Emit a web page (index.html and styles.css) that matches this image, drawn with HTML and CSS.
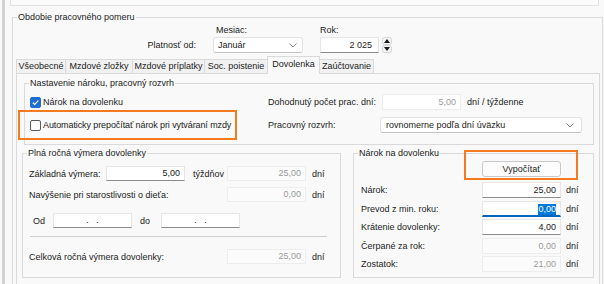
FILE: index.html
```html
<!DOCTYPE html>
<html lang="sk">

<head>
    <meta charset="UTF-8" />
    <meta name="viewport" content="width=device-width, initial-scale=1.0" />
    <title>Dovolenka</title>
    <link rel="stylesheet" href="styles.css">
</head>

<body>
    <div class="win">
        <div class="strip"></div>

        <!-- obdobie pracovneho pomeru -->
        <fieldset class="period">
            <legend>Obdobie pracovného pomeru</legend>
            <div class="period-head">
                <span></span>
                <span class="cap month">Mesiac:</span>
                <span class="cap">Rok:</span>
                <span class="lbl platnost">Platnosť od:</span>
                <div class="sel month-sel">
                    <span>Január</span>
                    <svg class="chev" width="8" height="5" viewBox="0 0 8 5"><polyline points="0.5,0.5 4,4 7.5,0.5" fill="none" stroke="#8a8a8a" stroke-width="1" /></svg>
                </div>
                <div class="year">
                    <div class="inp edit">2 025</div>
                    <svg class="spin" width="10" height="16" viewBox="0 0 10 16">
                        <rect x="0.5" y="0.5" width="9" height="7" rx="2" fill="#f4f4f4" stroke="#d6d6d6" />
                        <rect x="0.5" y="8.5" width="9" height="7" rx="2" fill="#f4f4f4" stroke="#d6d6d6" />
                        <polygon points="5,2 8,6 2,6" fill="#1a1a1a" />
                        <polygon points="2,10 8,10 5,14" fill="#1a1a1a" />
                    </svg>
                </div>
            </div>

            <!-- zalozky -->
            <div class="tabs">
                <span class="tab t1">Všeobecné</span>
                <span class="tab t2">Mzdové zložky</span>
                <span class="tab t3">Mzdové príplatky</span>
                <span class="tab t4">Soc. poistenie</span>
                <span class="tab t5 active">Dovolenka</span>
                <span class="tab t6">Zaúčtovanie</span>
            </div>

            <div class="panel">
                <fieldset class="grp g1">
                    <legend>Nastavenie nároku, pracovný rozvrh</legend>
                    <div class="g1-grid">
                        <div class="chk-cell">
                            <span class="chk on">
                                <svg width="9" height="9" viewBox="0 0 9 9"><polyline points="1.8,4.6 3.7,6.5 7.3,2.6" fill="none" stroke="#fff" stroke-width="1.2" /></svg>
                            </span>
                            <span>Nárok na dovolenku</span>
                        </div>
                        <span class="lbl">Dohodnutý počet prac. dní:</span>
                        <div class="inp off white">5,00</div>
                        <span class="unit wide">dní / týždenne</span>

                        <div class="chk-cell">
                            <span class="hl">
                                <span class="chk"></span>
                                <span class="auto-txt">Automaticky prepočítať nárok pri vytváraní mzdy</span>
                            </span>
                        </div>
                        <span class="lbl">Pracovný rozvrh:</span>
                        <div class="sel plan-sel">
                            <span>rovnomerne podľa dní úväzku</span>
                            <svg class="chev" width="8" height="5" viewBox="0 0 8 5"><polyline points="0.5,0.5 4,4 7.5,0.5" fill="none" stroke="#8a8a8a" stroke-width="1" /></svg>
                        </div>
                    </div>
                </fieldset>

                <div class="pair">
                    <fieldset class="grp g2">
                        <legend>Plná ročná výmera dovolenky</legend>
                        <div class="row ra">
                            <span class="lbl w77">Základná výmera:</span>
                            <div class="inp edit">5,00</div>
                            <span class="lbl w34 ml8">týždňov</span>
                            <div class="inp off">25,00</div>
                            <span class="unit">dní</span>
                        </div>
                        <div class="row rb">
                            <span class="lbl w198">Navýšenie pri starostlivosti o dieťa:</span>
                            <div class="inp off">0,00</div>
                            <span class="unit">dní</span>
                        </div>
                        <div class="row rc">
                            <span class="lbl od">Od</span>
                            <div class="inp edit date">.&nbsp;&nbsp;&nbsp;.</div>
                            <span class="lbl do">do</span>
                            <div class="inp edit date">.&nbsp;&nbsp;&nbsp;.</div>
                        </div>
                        <div class="sep"></div>
                        <div class="row rd">
                            <span class="lbl w198">Celková ročná výmera dovolenky:</span>
                            <div class="inp off">25,00</div>
                            <span class="unit">dní</span>
                        </div>
                    </fieldset>

                    <fieldset class="grp g3">
                        <legend>Nárok na dovolenku</legend>
                        <button class="calc">Vypočítať</button>
                        <div class="rows3">
                            <div class="row3">
                                <span class="lbl">Nárok:</span>
                                <div class="inp edit">25,00</div>
                                <span class="unit">dní</span>
                            </div>
                            <div class="row3">
                                <span class="lbl">Prevod z min. roku:</span>
                                <div class="inp focus"><span class="selected">0,00</span></div>
                                <span class="unit">dní</span>
                            </div>
                            <div class="row3">
                                <span class="lbl">Krátenie dovolenky:</span>
                                <div class="inp edit">4,00</div>
                                <span class="unit">dní</span>
                            </div>
                            <div class="row3">
                                <span class="lbl">Čerpané za rok:</span>
                                <div class="inp off">0,00</div>
                                <span class="unit">dní</span>
                            </div>
                            <div class="row3">
                                <span class="lbl">Zostatok:</span>
                                <div class="inp off">21,00</div>
                                <span class="unit">dní</span>
                            </div>
                        </div>
                    </fieldset>
                </div>
            </div>
        </fieldset>
    </div>
</body>

</html>
```

FILE: styles.css
```css
* {
    margin: 0;
    padding: 0;
    box-sizing: border-box;
}

body {
    background: #f9f9f9;
    font: 9px "Liberation Sans", Arial, sans-serif;
    color: #1b1b1b;
    overflow: hidden;
}

.win {
    height: 284px;
    margin-left: 2px;
    border-left: 3px solid #d2d2d2;
    overflow: hidden;
}

.strip {
    height: 6px;
    margin: 0 5px 0 5px;
    border: 1px solid #e2e2e2;
    border-top: none;
    background: #fbfbfb;
}

fieldset {
    border: 1px solid #dadada;
    min-width: 0;
}

legend {
    line-height: 12px;
    padding: 0 1px;
    margin-left: 2px;
    color: #1b1b1b;
}

.period {
    margin: 5px 1px 0 7px;
    height: 300px;
}

.period legend {
    margin-left: 4px;
}

.period-head {
    display: grid;
    grid-template-columns: 183px 90px auto;
    grid-template-rows: 13px 16px;
    column-gap: 17px;
    margin-top: 1px;
}

.cap {
    line-height: 13px;
}

.month {
    padding-left: 3px;
}

.platnost {
    text-align: right;
    line-height: 16px;
}

.lbl {
    white-space: nowrap;
}

/* vstupne polia */
.inp {
    width: 79px;
    height: 15px;
    line-height: 13px;
    background: #fff;
    border: 1px solid #e6e6e6;
    text-align: right;
    padding-right: 4px;
    white-space: nowrap;
}

.inp.edit {
    border-bottom-color: #8c8c8c;
    color: #1b1b1b;
}

.inp.off {
    background: #fbfbfb;
    border-color: #ededed;
    color: #9a9a9a;
}

.inp.off.white {
    background: #fff;
}

.inp.focus {
    border-bottom: 2px solid #0067c0;
}

.selected {
    background: #0078d7;
    color: #fff;
    padding: 0 0 1px;
}

.inp.date {
    text-align: center;
    padding-right: 0;
}

.sel {
    display: flex;
    align-items: center;
    justify-content: space-between;
    background: #fff;
    border: 1px solid #e2e2e2;
    border-bottom-color: #c4c4c4;
    border-radius: 3px;
    padding: 0 5px 0 4px;
    height: 16px;
}

.year {
    display: flex;
    align-items: center;
    gap: 3px;
}

.year .inp {
    width: 59px;
    height: 16px;
    line-height: 14px;
    padding-right: 6px;
}

/* zalozky */
.tabs {
    display: flex;
    align-items: flex-end;
    height: 17px;
    margin-top: 3px;
    padding-left: 3px;
    position: relative;
    z-index: 1;
}

.tab {
    height: 14px;
    line-height: 13px;
    border: 1px solid #dadada;
    border-bottom: none;
    background: #f1f1f1;
    text-align: center;
    margin-right: -1px;
    white-space: nowrap;
}

.tab.active {
    height: 18px;
    margin-bottom: -1px;
    background: #f9f9f9;
    line-height: 15px;
}

.t1 { width: 50px; }
.t2 { width: 68px; }
.t3 { width: 73px; }
.t4 { width: 64px; }
.t5 { width: 53px; }
.t6 { width: 55px; }

.panel {
    margin: 0 2px 0 3px;
    border: 1px solid #dadada;
    padding: 3px 5px 0;
    height: 260px;
}

.g1 {
    margin-left: 2px;
    padding: 5px 0 11px;
}

.g1-grid {
    display: grid;
    grid-template-columns: 243px 114px 79px auto;
    grid-template-rows: 16px 16px;
    row-gap: 7px;
    align-items: center;
}

.chk-cell {
    display: flex;
    align-items: center;
    height: 16px;
    padding-left: 5px;
    white-space: nowrap;
}

.chk {
    flex: none;
    width: 11px;
    height: 11px;
    border: 1px solid #5a5a5a;
    border-radius: 2px;
    background: #fff;
    margin-right: 2px;
    display: flex;
    align-items: center;
    justify-content: center;
}

.chk.on {
    background: #1c6fd0;
    border-color: #1c6fd0;
}

.hl {
    display: flex;
    align-items: center;
    height: 16px;
    width: 205px;
    margin-left: -5px;
    padding-left: 5px;
    outline: 2px solid #f47a20;
    outline-offset: 5px;
}

.auto-txt {
    letter-spacing: -0.1px;
}

.g1 .inp {
    height: 16px;
    line-height: 14px;
}

.unit {
    margin-left: 6px;
    white-space: nowrap;
}

.plan-sel {
    grid-column: 3 / 5;
    width: 202px;
    margin-left: -2px;
    padding-left: 5px;
    padding-right: 7px;
}

.pair {
    display: flex;
    gap: 12px;
    margin-top: 2px;
}

.g2 {
    width: 319px;
    height: 131px;
}

.g2 .row {
    margin-left: 6px;
}

.g3 {
    flex: 1;
    height: 131px;
}

.row {
    display: flex;
    align-items: center;
    height: 15px;
}

.ra { margin-top: 7px; }
.rb { margin-top: 6px; }
.rc { margin-top: 11px; }
.rd { margin-top: 12px; }

.w77 { width: 77px; }
.w34 { width: 34px; }
.w198 { width: 198px; }
.ml8 { margin-left: 8px; }

.od {
    width: 24px;
    padding-left: 4px;
}

.do {
    width: 21px;
    margin-left: 8px;
}

.sep {
    height: 1px;
    background: #cfcfcf;
    margin: 8px 13px 0 7px;
}

.calc {
    display: block;
    position: relative;
    width: 79px;
    height: 16px;
    margin: 2px 0 0 128px;
    border: 1px solid #c9c9c9;
    border-radius: 3px;
    background: #fdfdfd;
    font: 9px "Liberation Sans", Arial, sans-serif;
    color: #1b1b1b;
}

/* oranzove zvyraznenie tlacidla */
.calc::after {
    content: "";
    position: absolute;
    top: -12px;
    left: -19px;
    right: -18px;
    bottom: -4px;
    border: 2px solid #f47a20;
}

.rows3 {
    display: flex;
    flex-direction: column;
    gap: 2.5px;
    margin-top: 5px;
}

.row3 {
    display: flex;
    align-items: center;
    height: 16px;
}

.row3 .lbl {
    width: 128px;
    padding-left: 7px;
}

.row3 .inp {
    height: 16px;
    line-height: 14px;
}

.row3 .unit {
    margin-left: 5px;
}
```
